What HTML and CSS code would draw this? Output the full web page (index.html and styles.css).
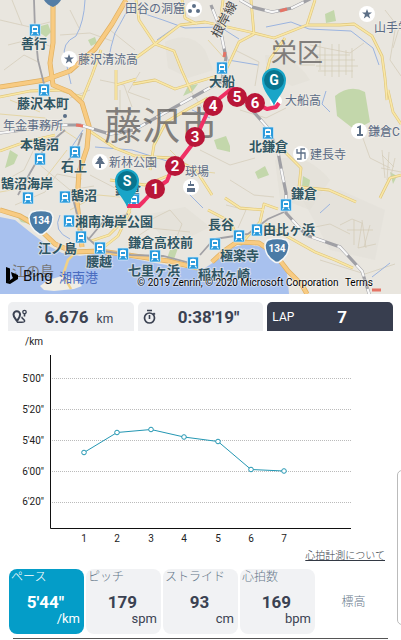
FILE: index.html
```html
<!DOCTYPE html>
<html lang="ja">
<head>
<meta charset="utf-8">
<meta name="viewport" content="width=device-width, initial-scale=1">
<title>ラップ</title>
<link rel="stylesheet" href="styles.css">
</head>
<body>
<main class="screen">
  <section class="map">
    <svg class="map-canvas" viewBox="0 0 401 294" role="img" aria-label="コース地図">
      <defs>
        <g id="train">
          <rect x="-5.500" y="-6" width="11" height="12" rx="1" fill="#2b9bdc" stroke="#d8edf8" stroke-width=".7"/>
          <path d="M-3-3.500q3-1.500 6 0V2H-3z" fill="#fff"/>
          <path d="M-2-2h4v2h-4z" fill="#2b9bdc"/>
          <path d="M-2 2.500-3.500 4.500M2 2.500 3.500 4.500" stroke="#fff" stroke-width="1.200"/>
        </g>
        <g id="shield">
          <path d="M-9-11Q0-14 9-11 11-10 12-6 12 5 2 11 0 12-2 11-12 5-12-6-11-10-9-11z" fill="#4a7ba6" stroke="#f4f6f6" stroke-width="1.500"/>
          <text y="1" class="shield-text">134</text>
        </g>
        <g id="pin">
          <path d="M0 26C-2 19-12 11-12 0a12 12 0 0 1 24 0C12 11 2 19 0 26z" fill="#19a5c8"/>
          <circle r="10" fill="#08758f"/>
        </g>
        <path id="star" d="M0-5 1.300-1.500H5L2 .8 3.200 4.500 0 2.200-3.200 4.500-2 .8-5-1.500h3.700z"/>
        <path id="minor-roads" d="M0 97 30 91 60 90 82 97M101 50 92 75 82 100M116 70v30M116 85l20-6M133 84l22-4 20 9 22-7 20-6M136 0l3 20 16 24M133 60l22-16 25-19 25-3 45 10 24 6 33-13 8-25M155 44l19 7 8 20 9 20M182 0l3 18 12 6M220 23l3-23M254 34l-3-34M307 25l33 0 14-1 18 12 10 20 3 22 2 22M285 38l-15 21-6 23M226 70l13-28 15-8M88 130l27 18 20 8 37 2 24 12 16 25M208 98l-20 11-22 13-12 23-4 25M0 151l25-9 30-7M110 180l35 5 25-10M285 152l16 16-2 19 30 3 27 12M388 90l5 22 8 12M380 198l10-20 11-3M225 198l15 10 24 2M240 245l20-23 4-18 14 5M265 224l50 28 20 8 18 8M100 250l18-14 12-25M133 202l-8 17-16 16-18 6M208 210l23 12 5 13"/>
        <path id="main-roads" d="M53 0v43l-3 20 3 22 17 7 12 11 7 23-2 22-8 24-2 30 5 45M126 0l-14 24-17 25-25 22-25 9-45 7M0 210l20 6 15 9 20 19 18 8 27-1 28 4 40 6 30 7M212 262l12-11 13-9 22 1 16 11 13 17 14 14 5 9"/>
        <path id="railways" d="M0 133l60-8 20 0 30 9 24-4 88-49 4-23-6-30-9-23 M222 82l30 28 16 18 10 24 4 21 4 20 0 20 20 22 34 12 22 24 10 32 10 8h35M240 0l12 7 20 5 20-4 20-10"/>
      </defs>

      <rect width="401" height="294" fill="#e9e6df"/>
      <g fill="#dedbd3">
        <path d="M165 42q25-12 40 8l8 20-25 8-20-10zM265 55q30 0 45 25l-18 6-25-15zM275 160q30-10 55 20l-20 30-30-12zM145 215l40-8 25 20-40 20z" opacity=".4"/>
        <path d="M300 195l40-5 45 20-10 50-45-10z" opacity=".3"/>
      </g>
      <g fill="#c3d7ab">
        <path d="M88 40l7-3 2 6-6 3zM41 26l7-2 3 8-5 5-6-4zM325 14l9-4 2 11-10 2zM335 96q15-12 30-4l5 30-15 8-18-14zM214 140l12-4 4 10 0 6-13-3zM255 172l10-6 4 9-11 4zM303 176l7 4-1 8-7-2zM10 150l8 5-4 9-9 4zM188 86l10-2-6 8-9 4zM390 172l7 4-4 8z"/>
        <path d="M170 250l8-2-5 14-7-1zM16 215l12 2 2 7-9-2z"/>
      </g>

      <path d="M0 217 15 220 30 232 47 245 62 253 80 256 100 253 125 257 155 263 185 268 205 268 220 258 230 248 246 244 262 247 276 258 287 273 289 294H0z" fill="#a8c1ee"/>
      <path d="M40 286l8-6 14-4 14 3 6 7-8 3-20 2-10-1z" fill="#f0eee6"/>

      <g fill="none" stroke="#d2cab6" stroke-width=".7">
        <path d="M0 20 30 27 50 22M8 45l24-6 20 8M12 0l10 25M60 35l30-2 22 8M70 10l10 20M65 100l25-10M4 70l20-15 14 7M15 205l30-13 12-18 25 5M6 180l18-10 12-25M100 80l24 5 8 22M120 90v22M140 72l-12 20 22 8M90 175l25 13 25-2M150 220l20-10 12 14-8 20M135 238l15-10 40 4M40 165l30 25 24-4M190 90l14 20M235 50l24 12-4 24M200 150l30 15 25-7M240 110l26 8 20-10M310 45l40 8 14-10M315 55h35M315 60h40M316 66h42M318 71h35M325 48v28M332 44v33M339 44v33M346 50v25M352 48v30M320 42v28M300 65h15M382 155l12 12M382 150l3 28M389 152l-2 28M395 158l-5 22M381 168l20 4M230 180l24 15 20 2M226 205l20 5-8 18M340 225l12-6 10 4-4 25 18-4M347 230h26M354 220v25M362 220l4 28M370 225l-6 22M300 230l30-6 20 10M320 260l45 14 30-10M110 30l25 20M385 10l14 18-6 20M395 30l-5 30 11 16M360 130l10 28 20 10"/>
      </g>
      <g fill="none" stroke="#e4d5a6" stroke-width="1">
        <path d="M0 192 40 185 67 150M0 114l45 4 35 23M70 210l28-15 22 2M170 150l20 20 25 3M208 40l18 20-8 28M10 100l30 12"/>
      </g>

      <g fill="none" stroke="#9bb4df" stroke-width="1">
        <path d="M85 0Q84 22 76 36 61 43 65 58L71 84M126 13q-7 13-11 20-4 12-7 29M133 10l30 10 22 8 35-1 19 12M157 40l20-14M266 27l25-5 18 7 42 2 22 17 6 17M228 60l30 5M95 147l37 3 35 11M330 112l-8-8 4-13M192 110l18 8M320 213l10-9M372 277l18-14M188 193l15 15M60 215q-8 16 10 24M83 130l-12 18"/>
      </g>

      <g fill="none" stroke-linejoin="round">
        <use href="#minor-roads" stroke="#dfc67c" stroke-width="2.800"/>
        <use href="#minor-roads" stroke="#f9e7a6" stroke-width="1.600"/>
        <use href="#main-roads" stroke="#e0b061" stroke-width="5"/>
        <use href="#main-roads" stroke="#f8cb82" stroke-width="3.600"/>
        <path d="M76 252l-8 8-5 15 8 14" stroke="#f1d186" stroke-width="2.500"/>
      </g>

      <g fill="none" stroke="#a2a1a5" stroke-width="1.800">
        <path d="M34 0l1 30 3 30 6 24 8 20M82 133l-5 16-12 16M65 130l-20 17-15 26-12 22M72 195l10 38 18 16M88 240l15-18 25-8M103 251l28 4 32 1 35 9M200 255l14-16 14-2 20-3 20-15 16-7"/>
      </g>
      <use href="#railways" fill="none" stroke="#a0a0a5" stroke-width="3.200"/>
      <use href="#railways" fill="none" stroke="#f8f8f8" stroke-width="2.200" stroke-dasharray="14 13"/>
      <path d="M76 125l7 1M224 57l1-5M280 11l7-2M372 290h9" fill="none" stroke="#e57466" stroke-width="3"/>

      <g class="district">
        <text x="104" y="139" font-size="38">藤沢市</text>
        <text x="271" y="62" font-size="26">栄区</text>
      </g>
      <text class="rail" transform="translate(219 39) rotate(-62)">根岸線</text>

      <g fill="#fff">
        <circle cx="69" cy="59" r="8"/><circle cx="194" cy="9" r="8"/><circle cx="367" cy="14" r="8"/>
        <circle cx="100" cy="162" r="8"/><circle cx="191" cy="187" r="8"/><circle cx="359" cy="131" r="8"/>
        <circle cx="301" cy="154" r="8"/><circle cx="276" cy="101" r="6"/>
      </g>
      <g fill="#5c6f87">
        <use href="#star" x="69" y="59"/><use href="#star" x="367" y="14"/>
        <circle cx="194" cy="6" r="2"/><circle cx="190" cy="11" r="2"/><circle cx="198" cy="11" r="2"/>
        <path d="M100 156l3 4h-1l3 4h-4v4h-2v-4h-4l3-4h-1zM187 188h8v4h-8zM188 186h6v-2h-3v-3h-1v3h-2zM357 127l4-2v9h2v2h-6v-2h2v-6h-2z"/>
        <circle cx="65" cy="116" r="2"/>
      </g>
      <path d="M297 149v4h8v6M305 149h-4v10h-4" fill="none" stroke="#5c6f87" stroke-width="1.300"/>

      <g class="poi">
        <text x="125" y="13">田谷の洞窟</text><text x="78" y="64">藤沢清流高</text><text x="374" y="32">山手学院</text>
        <text x="3" y="130">年金事務所</text><text x="109" y="167">新林公園</text><text x="185" y="176">球場</text>
        <text x="285" y="105">大船高</text><text x="368" y="136">鎌倉C</text><text x="310" y="159">建長寺</text>
        <text x="12" y="276" class="island">江の島</text><text x="59" y="282" class="port">湘南港</text>
      </g>
      <g class="station">
        <text x="21" y="48">善行</text><text x="17" y="108">藤沢本町</text><text x="20" y="149">本鵠沼</text>
        <text x="61" y="171">石上</text><text x="1" y="188">鵠沼海岸</text><text x="71" y="200">鵠沼</text>
        <text x="75" y="226">湘南海岸公園</text><text x="38" y="253">江ノ島</text><text x="86" y="266">腰越</text>
        <text x="128" y="247">鎌倉高校前</text><text x="128" y="275">七里ヶ浜</text><text x="198" y="279">稲村ヶ崎</text>
        <text x="220" y="260">極楽寺</text><text x="208" y="229">長谷</text><text x="263" y="234">由比ヶ浜</text>
        <text x="291" y="198">鎌倉</text><text x="249" y="151">北鎌倉</text><text x="209" y="86">大船</text>
        <text x="115" y="194">鎌倉</text>
      </g>

      <use href="#train" x="35" y="30"/><use href="#train" x="44" y="90"/><use href="#train" x="40" y="159"/>
      <use href="#train" x="75" y="152"/><use href="#train" x="28" y="198"/><use href="#train" x="65" y="197"/>
      <use href="#train" x="69" y="221"/><use href="#train" x="81" y="237"/><use href="#train" x="100" y="248"/>
      <use href="#train" x="123" y="254"/><use href="#train" x="155" y="256"/><use href="#train" x="193" y="263"/>
      <use href="#train" x="215" y="244"/><use href="#train" x="239" y="236"/><use href="#train" x="257" y="230"/>
      <use href="#train" x="286" y="205"/><use href="#train" x="268" y="133"/><use href="#train" x="222" y="68"/>
      <use href="#train" x="134" y="200"/>
      <use href="#shield" x="41" y="223"/><use href="#shield" x="277" y="251"/>

      <path d="M127 206h12l5-5 11-12 12-8 4-10 7-8 13-17 8-15 9-20 12-13 10-8 5-1 10 9 14 7 8 4 9-2 3-4" fill="none" stroke="#f02f64" stroke-width="4" stroke-linejoin="round"/>
      <g class="lap-marks" fill="#b91638">
        <circle cx="155" cy="189" r="10"/><text x="155" y="194">1</text>
        <circle cx="175" cy="166" r="10"/><text x="175" y="171">2</text>
        <circle cx="195" cy="137" r="10"/><text x="195" y="142">3</text>
        <circle cx="213" cy="106" r="10"/><text x="213" y="111">4</text>
        <circle cx="237" cy="97" r="10"/><text x="237" y="102">5</text>
        <circle cx="255" cy="103" r="10"/><text x="255" y="108">6</text>
      </g>
      <path d="M44 0h17q-3 5-8 7-6-2-9-7z" fill="#547da5"/>
      <use href="#pin" x="127" y="181"/><text class="pin-text" x="127" y="186">S</text>
      <use href="#pin" x="274" y="80"/><text class="pin-text" x="274" y="85">G</text>
    </svg>
    <div class="map-brand">
      <svg class="bing-icon" viewBox="0 0 14 18" aria-hidden="true"><path d="M1 0l4 1.500V13l-4 3zM6 5l7 3v4L5 17l-4-1 7-5-1-2z"/></svg>
      <span>Bing</span>
    </div>
    <p class="map-credit">© 2019 Zenrin, © 2020 Microsoft Corporation <a href="#terms">Terms</a></p>
  </section>

  <nav class="summary">
    <button class="summary-tab" type="button">
      <svg class="summary-icon" viewBox="0 0 16 16" aria-hidden="true"><path d="M5 12C3 9 1.500 8 1.500 5.500a3.300 3.300 0 0 1 6.600 0C8 8 7 9 5 12z" fill="none" stroke="#3b4252" stroke-width="2"/><circle cx="12.500" cy="3" r="1.700" fill="none" stroke="#3b4252" stroke-width="1.300"/><path d="M12.500 5v2.500M10.500 8c-2 1.500 3 2 2 4.500-.5 1-3 .8-7.500.8" fill="none" stroke="#3b4252" stroke-width="1.600"/></svg>
      <span class="summary-value">6.676 <small>km</small></span>
    </button>
    <button class="summary-tab" type="button">
      <svg class="summary-icon" viewBox="0 0 16 16" aria-hidden="true"><circle cx="7.500" cy="9" r="5" fill="none" stroke="#3b4252" stroke-width="1.700"/><path d="M5 1.500h5M7.500 6v4M11.500 4l1.500 1.500" fill="none" stroke="#3b4252" stroke-width="1.600"/></svg>
      <span class="summary-value">0:38'19"</span>
    </button>
    <button class="summary-tab summary-tab-active" type="button">
      <span class="summary-label">LAP</span>
      <span class="summary-value">7</span>
    </button>
  </nav>

  <section class="chart">
    <svg class="chart-canvas" viewBox="0 0 401 217" role="img" aria-label="ラップごとのペース">
      <text x="25" y="14">/km</text>
      <g class="grid">
        <path d="M52 47.500H351M52 78.500H351M52 109.500H351M52 140.500H351M52 171.500H351"/>
      </g>
      <path class="axis" d="M50.500 24V197.500H351"/>
      <g class="y-labels">
        <text x="44" y="51">5'00"</text><text x="44" y="82">5'20"</text><text x="44" y="113">5'40"</text>
        <text x="44" y="144">6'00"</text><text x="44" y="174">6'20"</text>
      </g>
      <g class="x-labels">
        <text x="84" y="211">1</text><text x="117" y="211">2</text><text x="151" y="211">3</text>
        <text x="184" y="211">4</text><text x="218" y="211">5</text><text x="251" y="211">6</text><text x="284" y="211">7</text>
      </g>
      <g class="series">
        <path d="M84 121.500 117 101.500 151 98.500 184 106 218 110.500 251 138.500 284 140"/>
        <circle cx="84" cy="121.500" r="2.300"/><circle cx="117" cy="101.500" r="2.300"/><circle cx="151" cy="98.500" r="2.300"/>
        <circle cx="184" cy="106" r="2.300"/><circle cx="218" cy="110.500" r="2.300"/><circle cx="251" cy="138.500" r="2.300"/><circle cx="284" cy="140" r="2.300"/>
      </g>
    </svg>
    <a class="help-link" href="#heart-rate">心拍計測について</a>
  </section>

  <div class="metrics">
    <button class="metric metric-active" type="button"><span class="metric-name">ペース</span><b>5'44"</b><span class="metric-unit">/km</span></button>
    <button class="metric" type="button"><span class="metric-name">ピッチ</span><b>179</b><span class="metric-unit">spm</span></button>
    <button class="metric" type="button"><span class="metric-name">ストライド</span><b>93</b><span class="metric-unit">cm</span></button>
    <button class="metric" type="button"><span class="metric-name">心拍数</span><b>169</b><span class="metric-unit">bpm</span></button>
    <button class="metric metric-plain" type="button">標高</button>
  </div>
  <hr class="divider">
  <div class="side-panel"></div>
</main>
</body>
</html>
```
FILE: styles.css
```css
* {
  box-sizing: border-box;
}

body {
  margin: 0;
  background: #fff;
  color: #3b4252;
  font-family: Roboto, "Noto Sans CJK JP", sans-serif;
  font-size: 12px;
}

button {
  margin: 0;
  padding: 0;
  border: 0;
  background: none;
  color: inherit;
  font: inherit;
}

.screen {
  position: relative;
  overflow: hidden;
}

.map {
  position: relative;
}

.map-canvas,
.chart-canvas {
  display: block;
  width: 100%;
  height: auto;
}

.district {
  fill: #64625f;
  fill-opacity: 0.8;
  font-weight: 400;
}

.rail {
  fill: #4b4b4b;
  font-size: 13px;
}

.poi {
  fill: #5c6c86;
  font-size: 12px;
}

.station {
  fill: #305663;
  font-size: 13px;
  font-weight: 700;
}

.poi,
.station,
.rail {
  stroke: #f0eee8;
  stroke-opacity: 0.6;
  stroke-width: 2px;
  paint-order: stroke;
}

.island {
  fill: #777;
  font-size: 14px;
  stroke: none;
}

.port {
  fill: #4a6cc0;
  font-size: 13px;
  stroke: none;
}

.shield-text,
.pin-text,
.lap-marks text {
  fill: #fff;
  font-weight: 700;
  text-anchor: middle;
}

.shield-text {
  font-size: 10px;
}

.pin-text {
  font-size: 14px;
}

.lap-marks text {
  font-size: 15px;
}

.map-brand {
  position: absolute;
  bottom: 8px;
  left: 5px;
  display: flex;
  align-items: center;
  gap: 4px;
  color: #111;
  font-size: 15px;
  line-height: 20px;
}

.bing-icon {
  width: 14px;
  height: 18px;
}

.map-credit {
  position: absolute;
  right: 28px;
  bottom: 4px;
  margin: 0;
  color: #000;
  font-size: 10px;
  line-height: 14px;
  text-shadow: 0 0 2px #fff, 0 0 2px #fff;
  white-space: nowrap;
}

.map-credit a {
  margin-left: 4px;
  color: inherit;
  text-decoration: none;
}

.summary {
  display: grid;
  grid-template-columns: repeat(3, 1fr);
  gap: 4px;
  padding: 8px 8px 0;
}

.summary-tab {
  display: flex;
  align-items: center;
  height: 29px;
  padding: 0 4px;
  border-radius: 5px 5px 0 0;
  background: #eeeff1;
}

.summary-tab-active {
  background: #383e4f;
  color: #fff;
}

.summary-icon {
  width: 16px;
  height: 16px;
}

.summary-label {
  width: 24px;
}

.summary-value {
  flex: 1;
  font-size: 17px;
  font-weight: 700;
  text-align: center;
}

.summary-value small {
  margin-left: 4px;
  font-size: 12px;
  font-weight: 400;
}

.chart {
  display: flex;
  flex-direction: column;
}

.chart-canvas {
  fill: #222;
  font-size: 10px;
}

.grid {
  fill: none;
  stroke: #bbb;
  stroke-dasharray: 1 1;
}

.axis {
  fill: none;
  stroke: #111;
}

.y-labels {
  text-anchor: end;
}

.x-labels {
  text-anchor: middle;
}

.series {
  fill: none;
  stroke: #2497b3;
}

.series circle {
  fill: #fff;
}

.help-link {
  align-self: flex-end;
  margin-right: 16px;
  color: #333944;
  font-size: 10px;
  font-weight: 300;
  line-height: 16px;
  text-decoration: underline;
}

.metrics {
  display: grid;
  grid-template-columns: repeat(5, 1fr);
  gap: 2px;
  padding: 5px 9px 4px;
}

.metric {
  display: flex;
  flex-direction: column;
  height: 65px;
  padding: 0 4px 0 2px;
  border-radius: 8px;
  background: #f1f2f4;
  line-height: 16px;
}

.metric b {
  margin-top: 8px;
  font-size: 17px;
  line-height: 18px;
  text-align: center;
}

.metric-name {
  color: #66788a;
  font-weight: 300;
  text-align: left;
}

.metric-unit {
  font-size: 13px;
  text-align: right;
}

.metric-active {
  background: #049dc8;
  color: #fff;
}

.metric-active .metric-name {
  color: #fff;
}

.metric-plain {
  align-items: center;
  justify-content: center;
  background: none;
  color: #66788a;
  font-weight: 300;
}

.divider {
  height: 1px;
  margin: 0 13px;
  border: 0;
  background: #555;
}

.side-panel {
  position: absolute;
  right: -8px;
  bottom: 14px;
  width: 12px;
  height: 155px;
  border: 1px solid #bbb;
  border-radius: 5px;
}
```
